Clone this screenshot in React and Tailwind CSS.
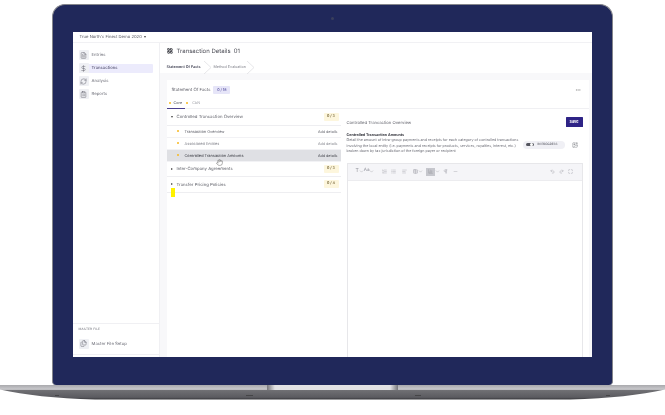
import React from 'react';
import {
  AlignLeft, BarChart3, ChevronDown, ClipboardList, DollarSign, FileText, Hand, LayoutGrid, List, ListOrdered,
  Maximize, MoreHorizontal, Pilcrow, Redo2, RefreshCw, Table, Undo2, Minus, Files, ImagePlus,
} from 'lucide-react';

const navItems = [
  { label: 'Entries', Icon: FileText },
  { label: 'Transactions', Icon: DollarSign, active: true },
  { label: 'Analysis', Icon: RefreshCw },
  { label: 'Reports', Icon: ClipboardList },
];

const SideItem = ({ label, Icon, active }) => (
  <div className={`flex items-center gap-[3px] h-[9px] mb-1 rounded-[1px] ${active ? 'bg-[#ecebfc] text-[#3d3a5c]' : 'text-[#6d6e78]'}`}>
    <span className="flex items-center justify-center w-[10px] h-[10px] rounded-[1px] bg-[#eff0f4]">
      <Icon size={7} strokeWidth={1.6} className="text-[#5f6069]" />
    </span>
    <span className="mt-[2px]">{label}</span>
  </div>
);

const Section = ({ label, count, open, h }) => (
  <div className={`flex items-center pl-[4px] pr-[2px] border-b border-[#eeeef1] ${h}`}>
    <span className={`w-0 h-0 mr-[4px] ${open
      ? 'border-x-[1.5px] border-x-transparent border-t-[2px] border-t-[#444]'
      : 'border-y-[1.5px] border-y-transparent border-l-[2px] border-l-[#444]'}`}
    />
    <span className="mt-[4px] text-[4.3px] text-[#5f6069]">{label}</span>
    <span className="ml-auto w-[15px] h-[8px] flex items-center justify-center rounded-[1px] bg-[#fdf6dd] text-[3.6px] font-semibold text-[#6b5a2a]">{count}</span>
  </div>
);

const SubRow = ({ label, active, light }) => (
  <div className={`flex items-center h-[12px] pl-[10px] pr-[3px] border-b border-[#f2f2f5] ${active ? 'bg-[#dfe0e4] text-[#3f4048]' : light ? 'text-[#85868e]' : 'text-[#62636c]'}`}>
    <span className="w-[2px] h-[2px] rounded-full bg-[#f7b821] mr-[6px]" />
    <span className="mt-[1px] text-[3.9px]">{label}</span>
    <span className="mt-[1px] ml-auto text-[3.7px]">Add details</span>
  </div>
);

const ToolIcon = ({ Icon, className = '' }) => <Icon size={5} strokeWidth={1.5} className={`text-[#8a8b94] ${className}`} />;

const LaptopBase = () => (
  <svg width="665" height="15" viewBox="0 0 665 15" className="block">
    <defs>
      <linearGradient id="edge" x1="0" y1="0" x2="0" y2="1">
        <stop offset="0" stopColor="#a9a9ad" />
        <stop offset="0.3" stopColor="#c9c9cc" />
        <stop offset="0.38" stopColor="#6f6f73" />
        <stop offset="0.85" stopColor="#5b5b60" />
        <stop offset="1" stopColor="#37373b" />
      </linearGradient>
      <linearGradient id="notch" x1="0" y1="0" x2="1" y2="0">
        <stop offset="0" stopColor="#77777b" />
        <stop offset="0.06" stopColor="#e2e2e4" />
        <stop offset="0.94" stopColor="#e2e2e4" />
        <stop offset="1" stopColor="#77777b" />
      </linearGradient>
    </defs>
    <path d="M0 0H665V4.5C640 10 610 13.5 570 14.5H95C55 13.5 25 10 0 4.5Z" fill="url(#edge)" />
    <path d="M267 0H398V5H267Z" fill="url(#notch)" />
    <path d="M55 10.5h4M246 10.5h7M415 10.5h6M606 10.5h4" stroke="#333" strokeWidth="0.6" />
  </svg>
);

export default function App() {
  return (
    <div className="w-[665px] h-[415px] bg-white overflow-hidden pt-1 font-['Inter','Liberation_Sans',sans-serif] [text-rendering:geometricPrecision]">
      <div className="ml-[52px] w-[561px] h-[381px] rounded-t-[13px] rounded-b-[4px] border-[1.5px] border-b-0 border-[#85868c] bg-[#20285a] pt-[26.5px] pl-[19.5px] relative">
        <span className="absolute top-[12px] left-[278px] w-[3px] h-[3px] rounded-full bg-[#3a3f5c]" />

        <div className="w-[519px] h-[325px] bg-white flex flex-col overflow-hidden relative blur-[0.25px]">
          <div className="h-[11px] shrink-0 flex items-center pl-[7px] gap-[2px] border-b border-[#f1f1f4] text-[4.2px] text-[#55565f]">
            <span className="mt-[3px]">True North's Finest Demo 2020</span>
            <span className="w-0 h-0 border-x-[1.5px] border-x-transparent border-t-[2px] border-t-[#444]" />
          </div>

          <div className="flex flex-1 min-h-0">
            <aside className="w-[87px] shrink-0 border-r border-[#f0f0f3] flex flex-col pt-[8px] pl-[6px] pr-[6px] text-[4.3px]">
              {navItems.map((item) => <SideItem key={item.label} {...item} />)}
              <div className="mt-auto mb-[2px] -mx-[6px] px-[6px] pt-[3px] h-[32px] border-t border-[#f0f0f3] border-b">
                <p className="text-[3.2px] tracking-[0.1px] text-[#70717a] mb-[8px]">MASTER FILE</p>
                <SideItem label="Master File Setup" Icon={Files} />
              </div>
            </aside>

            <main className="flex-1 min-w-0 flex flex-col bg-[#f8f8fa]">
              <div className="h-[30px] shrink-0 bg-white pl-[7px] pt-[4px]">
                <div className="flex items-center text-[6px] text-[#4b4c55]">
                  <LayoutGrid size={6} strokeWidth={3} className="text-[#33343c] mr-[4px]" />
                  Transaction Details
                  <span className="ml-[3px]">01</span>
                </div>
                <div className="flex items-center mt-[5px] text-[3.7px] whitespace-nowrap">
                  <span className="font-semibold text-[#3d3e50] w-[37px]">Statement Of Facts</span>
                  <svg width="8" height="13" viewBox="0 0 8 13" className="mr-[1px]"><path d="M0 0l7 6.5L0 13" fill="none" stroke="#dcdce0" strokeWidth="0.7" /></svg>
                  <span className="text-[#82838c] ml-[1px] w-[33px]">Method Evaluation</span>
                  <svg width="8" height="13" viewBox="0 0 8 13"><path d="M0 0l7 6.5L0 13" fill="none" stroke="#dcdce0" strokeWidth="0.7" /></svg>
                </div>
              </div>

              <div className="flex-1 min-h-0 mt-[7px] ml-[7px] mr-[3px] bg-white flex flex-col">
                <div className="h-[29px] shrink-0 border-b-[1.5px] border-[#f0f0f3] relative">
                  <div className="flex items-center pl-[5px] pt-[6px] pr-[8px] text-[4.3px] text-[#5a5b64]">
                    <span className="mt-[2px]">Statement Of Facts</span>
                    <span className="ml-[3px] w-[17px] h-[8px] flex items-center justify-center rounded-[1px] bg-[#e6e5f8] text-[3.7px] font-medium text-[#5650a0]">0 / 18</span>
                    <MoreHorizontal size={6} strokeWidth={1.5} className="ml-auto text-[#777]" />
                  </div>
                  <div className="flex items-center mt-[6px] pl-[2px] text-[3.8px]">
                    <span className="w-[2px] h-[2px] rounded-full bg-[#f7b821] mr-[3px]" />
                    <span className="text-[#50515a]">Core</span>
                    <span className="w-[2px] h-[2px] rounded-full bg-[#f7b821] ml-[4px] mr-[4px]" />
                    <span className="text-[#a5a6ad]">CbN</span>
                  </div>
                  <span className="absolute left-0 bottom-[-1.5px] w-[18px] h-[1px] bg-[#4a3f8f]" />
                </div>

                <div className="flex flex-1 min-h-0">
                  <div className="w-[174px] shrink-0 relative">
                    <Section label="Controlled Transaction Overview" count="0 / 3" open h="h-[17px]" />
                    <SubRow label="Transaction Overview" />
                    <SubRow label="Associated Entities" light />
                    <SubRow label="Controlled Transaction Amounts" active />
                    <Section label="Inter-Company Agreements" count="0 / 3" h="h-[15px]" />
                    <Section label="Transfer Pricing Policies" count="0 / 4" h="h-[16px]" />
                    <span className="absolute left-[4px] top-[79px] w-[4px] h-[9px] bg-[#fff200]" />
                    <Hand size={7} strokeWidth={1.4} className="absolute left-[49px] top-[50px] text-[#444] fill-white" />
                  </div>

                  <div className="flex-1 min-w-0 pt-[8px] pl-[6px] pr-[6px] flex flex-col">
                    <div className="flex items-center justify-between h-[10px] text-[4.2px] text-[#62636c]">
                      <span className="mt-[5px]">Controlled Transaction Overview</span>
                      <button className="w-[17px] h-[10px] bg-[#2e2386] rounded-[0.5px] text-white text-[3.8px] font-bold">Save</button>
                    </div>
                    <div className="flex items-center mt-[5px]">
                      <div className="w-[176px] shrink-0 text-[3.65px] leading-[5.5px] text-[#6a6b74]">
                        <p className="font-bold text-[#33343c]">Controlled Transaction Amounts</p>
                        <p className="whitespace-nowrap">Detail the amount of intra-group payments and receipts for each category of controlled transactions</p>
                        <p className="whitespace-nowrap">involving the local entity (i.e. payments and receipts for products, services, royalties, interest, etc.)</p>
                        <p className="whitespace-nowrap">broken down by tax jurisdiction of the foreign payer or recipient</p>
                      </div>
                      <div className="flex items-center mt-[4px]">
                        <div className="w-[42px] h-[8px] rounded-full bg-[#f0f0f5] flex items-center pl-[3px]">
                          <span className="w-[8px] h-[3.5px] rounded-full bg-[#55565f] flex items-center justify-end pr-[0.5px]">
                            <span className="w-[3px] h-[3px] rounded-full bg-white" />
                          </span>
                          <span className="ml-[4px] text-[3px] font-medium text-[#585963] whitespace-nowrap">IN PROGRESS</span>
                        </div>
                        <ImagePlus size={6} strokeWidth={1.5} className="ml-[7px] text-[#5f6069]" />
                      </div>
                    </div>

                    <div className="flex-1 min-h-0 mt-[9px] flex flex-col border border-[#e7e7ea] border-b-0">
                      <div className="h-[17px] shrink-0 flex items-center pl-[8px] pr-[9px] bg-[#f5f5f8] border-b border-[#ececef] text-[#8a8b94]">
                        <span className="text-[5px] leading-none">T</span>
                        <ChevronDown size={5} strokeWidth={1.6} />
                        <span className="text-[4.6px] leading-none">Aa</span>
                        <ChevronDown size={5} strokeWidth={1.6} />
                        <ToolIcon Icon={ListOrdered} className="ml-[8px]" />
                        <ToolIcon Icon={List} className="ml-[4px]" />
                        <ToolIcon Icon={AlignLeft} className="ml-[6px]" />
                        <ToolIcon Icon={Table} className="ml-[6px]" />
                        <ChevronDown size={5} strokeWidth={1.6} />
                        <span className="ml-[3px] w-[9px] h-[8px] flex items-center justify-center bg-[#c6c7cd]">
                          <BarChart3 size={5} strokeWidth={1.5} className="text-[#8a8b94]" />
                        </span>
                        <ChevronDown size={5} strokeWidth={1.6} />
                        <ToolIcon Icon={Pilcrow} className="ml-[3px]" />
                        <ToolIcon Icon={Minus} className="ml-[5px]" />
                        <ToolIcon Icon={Undo2} className="ml-auto" />
                        <ToolIcon Icon={Redo2} className="ml-[4px]" />
                        <ToolIcon Icon={Maximize} className="ml-[4px]" />
                      </div>
                      <div className="flex-1 bg-white" />
                    </div>
                  </div>
                </div>
              </div>
            </main>
          </div>
        </div>
      </div>
      <LaptopBase />
    </div>
  );
}
